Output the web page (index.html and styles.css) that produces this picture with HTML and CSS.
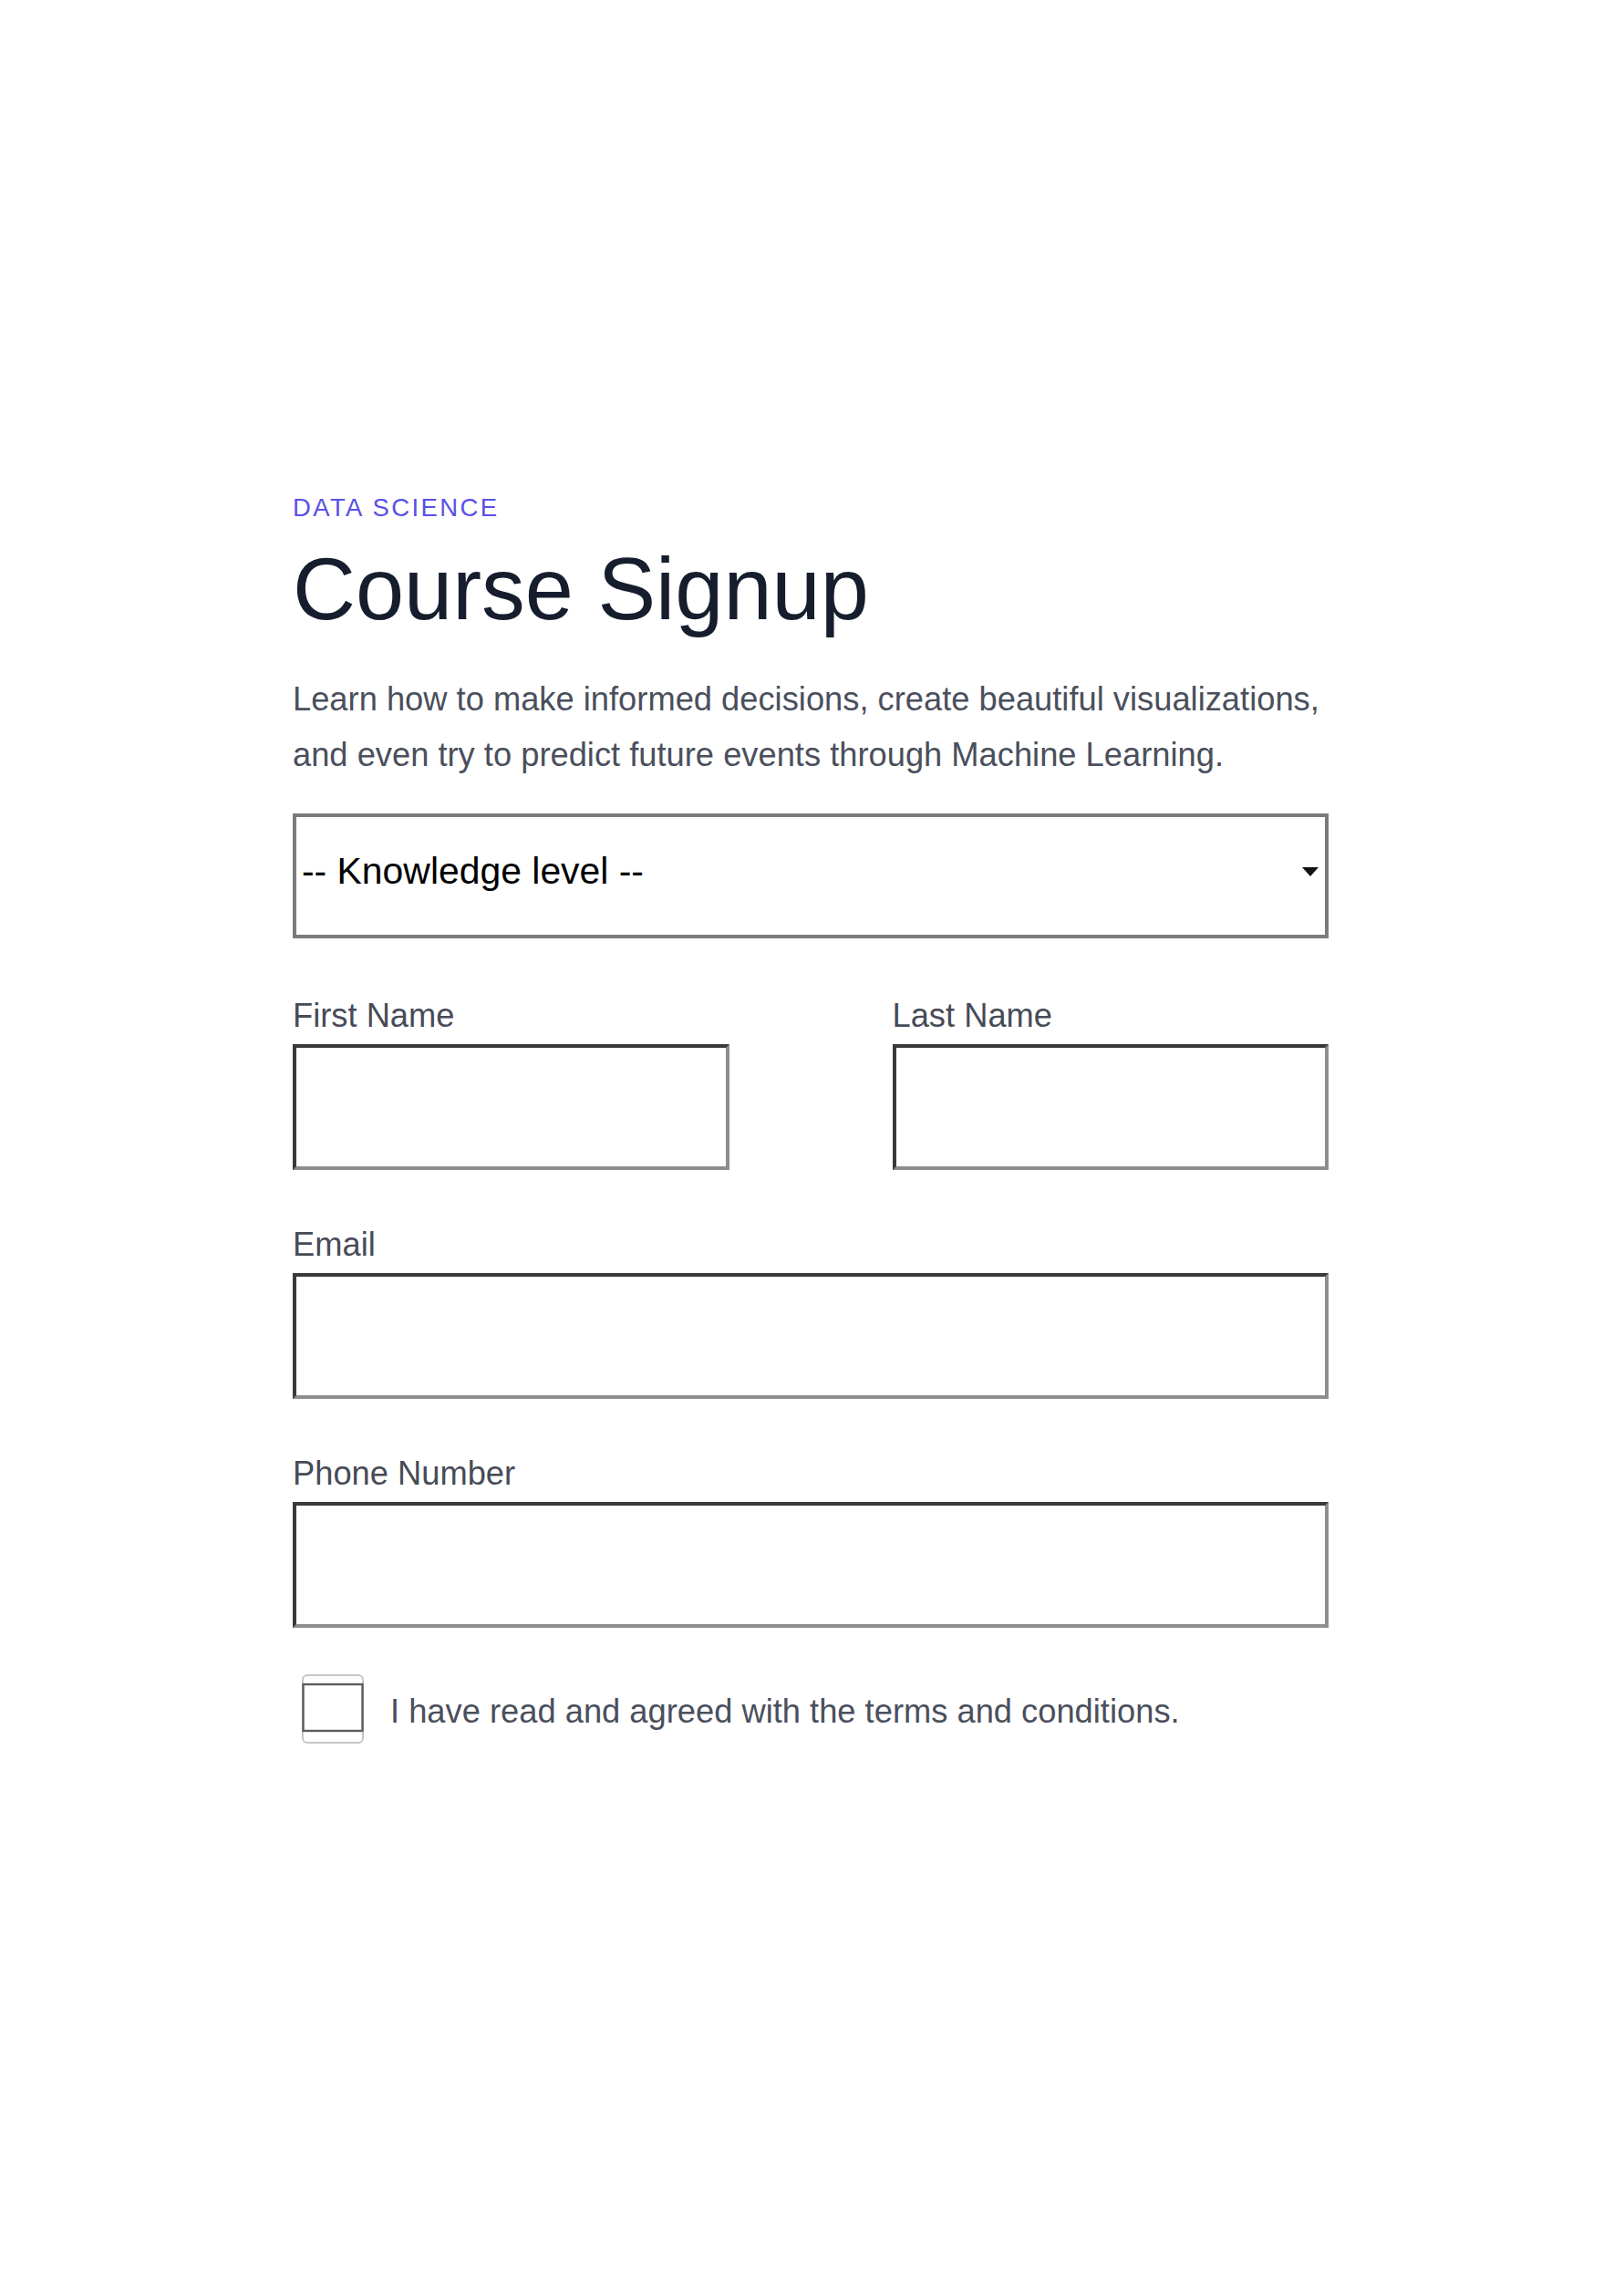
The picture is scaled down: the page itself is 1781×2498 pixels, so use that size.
FILE: index.html
```html
<!DOCTYPE html>
<html lang="en">
<head>
<meta charset="utf-8">
<title>Course Signup</title>
<link rel="stylesheet" href="styles.css">
</head>
<body>
<main class="page">
  <p class="eyebrow">DATA SCIENCE</p>
  <h1 class="title">Course Signup</h1>
  <p class="lead">Learn how to make informed decisions, create beautiful visualizations, and even try to predict future events through Machine Learning.</p>

  <form class="form">
    <div class="select-wrap">
      <select class="select">
        <option>-- Knowledge level --</option>
        <option>Beginner</option>
        <option>Intermediate</option>
        <option>Advanced</option>
      </select>
      <svg class="select-arrow" width="18" height="10" viewBox="0 0 18 10" aria-hidden="true"><path d="M0 0 H18 L9 10 Z" fill="#111"/></svg>
    </div>

    <div class="row">
      <div class="field">
        <label class="label" for="first">First Name</label>
        <input class="input" id="first" type="text">
      </div>
      <div class="field">
        <label class="label" for="last">Last Name</label>
        <input class="input" id="last" type="text">
      </div>
    </div>

    <div class="field field-gap">
      <label class="label" for="email">Email</label>
      <input class="input" id="email" type="email">
    </div>

    <div class="field field-gap">
      <label class="label" for="phone">Phone Number</label>
      <input class="input" id="phone" type="tel">
    </div>

    <label class="check-row">
      <svg class="checkbox" width="68" height="76" viewBox="0 0 68 76" aria-hidden="true">
        <rect x="1" y="1" width="66" height="74" rx="5" fill="#fff" stroke="#c6c6c6" stroke-width="2"/>
        <rect x="1.5" y="11" width="65" height="51" fill="#fff" stroke="#5c5c5c" stroke-width="2.4"/>
      </svg>
      <span class="check-text">I have read and agreed with the terms and conditions.</span>
    </label>
  </form>
</main>
</body>
</html>
```

FILE: styles.css
```css
html, body {
  margin: 0;
  padding: 0;
  background: #ffffff;
}

body {
  font-family: "Liberation Sans", Arial, Helvetica, sans-serif;
}

.page {
  width: 1136px;
  margin-left: 321px;
  padding-top: 537px;
  padding-bottom: 400px;
}

.eyebrow {
  margin: 0;
  font-size: 27.5px;
  line-height: 40px;
  letter-spacing: 2.4px;
  color: #5a50e6;
}

.title {
  margin: 22px 0 0;
  font-size: 95.5px;
  line-height: 95px;
  font-weight: 400;
  color: #161e2e;
}

.lead {
  margin: 42px 0 0;
  font-size: 36.3px;
  line-height: 61px;
  color: #4a4f5c;
}

.form {
  margin: 34px 0 0;
}

.select-wrap {
  position: relative;
}

.select {
  display: block;
  width: 100%;
  height: 137px;
  box-sizing: border-box;
  margin: 0;
  padding: 0 40px 11px 6px;
  border: 4px solid #7b7b7b;
  border-radius: 0;
  background: #ffffff;
  font-family: "Liberation Sans", Arial, Helvetica, sans-serif;
  font-size: 40.9px;
  color: #000000;
  appearance: none;
  -webkit-appearance: none;
  outline: none;
}

.select-arrow {
  position: absolute;
  top: 59px;
  right: 11px;
  pointer-events: none;
}

.row {
  display: grid;
  grid-template-columns: 1fr 1fr;
  column-gap: 179px;
  margin-top: 59px;
}

.field {
  display: flex;
  flex-direction: column;
}

.field-gap {
  margin-top: 56px;
}

.label {
  display: block;
  font-size: 36.3px;
  line-height: 52px;
  color: #474b57;
}

.input {
  display: block;
  width: 100%;
  height: 138px;
  box-sizing: border-box;
  margin: 5px 0 0;
  padding: 0 10px;
  border-style: solid;
  border-width: 4px;
  border-color: #3a3a3a #8e8e8e #8e8e8e #3a3a3a;
  border-radius: 0;
  background: #ffffff;
  font-family: "Liberation Sans", Arial, Helvetica, sans-serif;
  font-size: 36px;
  appearance: none;
  -webkit-appearance: none;
  outline: none;
}

.check-row {
  display: flex;
  align-items: flex-start;
  margin-top: 51px;
  margin-left: 10px;
}

.checkbox {
  flex: none;
  display: block;
}

.check-text {
  margin-left: 29px;
  margin-top: 15px;
  font-size: 36.3px;
  line-height: 52px;
  color: #4a4f5c;
}
```
